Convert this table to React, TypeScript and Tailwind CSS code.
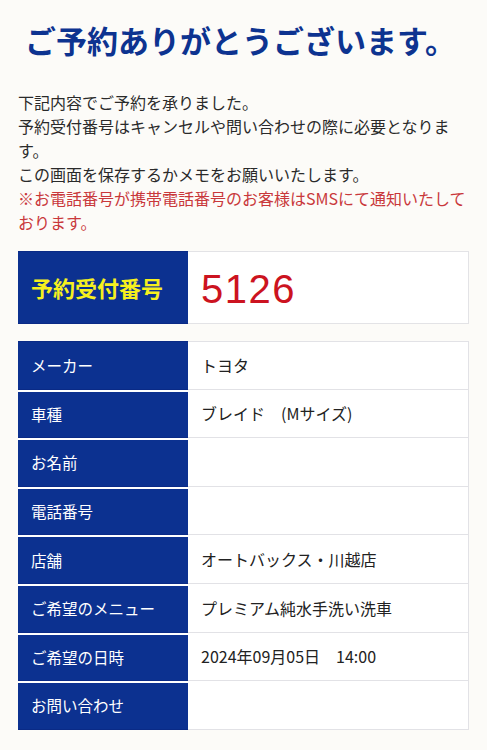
import React from 'react';

const ROWS = [
  { label: 'メーカー', value: 'トヨタ' },
  { label: '車種', value: 'ブレイド　(Mサイズ)' },
  { label: 'お名前', value: '' },
  { label: '電話番号', value: '' },
  { label: '店舗', value: 'オートバックス・川越店' },
  { label: 'ご希望のメニュー', value: 'プレミアム純水手洗い洗車' },
  { label: 'ご希望の日時', value: '2024年09月05日　14:00' },
  { label: 'お問い合わせ', value: '' },
];

const font = { fontFamily: '"Noto Sans CJK JP", "Noto Sans", sans-serif' };

export default function App() {
  return (
    <div className="min-h-[750px] w-[487px] bg-[#fcfbf8] pb-6" style={font}>
      {/* Title */}
      <h1 className="pl-[25px] pt-[15px] text-[31px] leading-[50px] font-semibold text-[#0d3390] whitespace-nowrap">
        ご予約ありがとうございます。
      </h1>

      {/* Notice */}
      <div className="px-[18px] pt-[25px] text-[16px] leading-[24px] text-[#2a2a2a] whitespace-nowrap">
        <p>下記内容でご予約を承りました。</p>
        <p>予約受付番号はキャンセルや問い合わせの際に必要となりま<br />す。</p>
        <p>この画面を保存するかメモをお願いいたします。</p>
        <p className="text-[#c9383b]">※お電話番号が携帯電話番号のお客様はSMSにて通知いたして<br />おります。</p>
      </div>

      {/* Reservation number */}
      <div className="mx-[18px] mt-[17px] grid grid-cols-[170px_1fr] h-[73px]">
        <div className="bg-[#0c3190] border-y border-[#0a2a86] flex items-center pl-[13px] text-[22px] font-bold text-[#f6f01e]">
          予約受付番号
        </div>
        <div className="bg-white border border-l-0 border-[#e3e3e6] flex items-center pl-[13px] pt-[2px] text-[40px] leading-none tracking-[1.5px] text-[#cc1320]" style={{ fontFamily: '"Liberation Sans", Arial, sans-serif' }}>
          5126
        </div>
      </div>

      {/* Details table */}
      <div className="mx-[18px] mt-[17px]">
        {ROWS.map((r, i) => (
          <div key={r.label} className="grid grid-cols-[170px_1fr] h-[48.6px]">
            <div className={`bg-[#0c3190] flex items-center pl-[13px] text-[15.5px] text-white border-b border-[#0a2a86] ${i === 0 ? 'border-t' : 'border-t-2 border-t-white'}`}>
              {r.label}
            </div>
            <div className={`bg-white flex items-center pl-[13px] text-[16px] text-[#222] border-r border-b border-[#e2e2e6] ${i === 0 ? 'border-t' : ''}`}>
              {r.value}
            </div>
          </div>
        ))}
      </div>
    </div>
  );
}
